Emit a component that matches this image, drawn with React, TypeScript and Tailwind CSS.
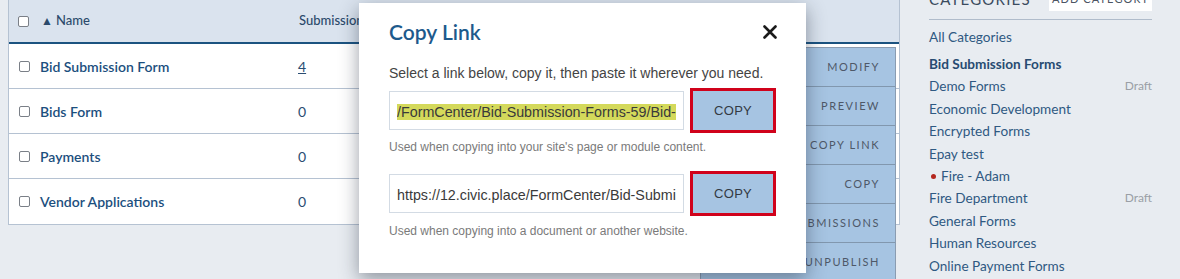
const FORMS = [
  { name: 'Bid Submission Form', count: '4', link: true },
  { name: 'Bids Form', count: '0', link: false },
  { name: 'Payments', count: '0', link: false },
  { name: 'Vendor Applications', count: '0', link: false },
];

const ACTIONS = ['MODIFY', 'PREVIEW', 'COPY LINK', 'COPY', 'SUBMISSIONS', 'UNPUBLISH'];

const CATEGORIES = [
  { name: 'Demo Forms', draft: true },
  { name: 'Economic Development' },
  { name: 'Encrypted Forms' },
  { name: 'Epay test' },
  { name: 'Fire - Adam', dot: true },
  { name: 'Fire Department', draft: true },
  { name: 'General Forms' },
  { name: 'Human Resources' },
  { name: 'Online Payment Forms' },
];

const muli = "font-['Lato','Noto_Sans',sans-serif]";
const arial = "font-['Liberation_Sans',Arial,sans-serif]";

function Checkbox() {
  return <span className="block h-[11px] w-[11px] shrink-0 rounded-[2px] border border-[#7a7f87] bg-white" />;
}

function CopyRow({ text, selected }: { text: string; selected?: boolean }) {
  return (
    <div className="flex items-center gap-[6px]">
      <div className="flex h-[39px] w-[299px] items-center overflow-hidden whitespace-nowrap border border-[#d3dbe4] bg-white pl-[7px] pr-[7px]">
        <div className="w-full overflow-hidden">
          <span
            className={`${arial} text-[14.3px] leading-[20px] text-[#3a3a3a] ${selected ? 'bg-[#d4d95b]' : ''}`}
          >
            {text}
          </span>
        </div>
      </div>
      <button
        type="button"
        className={`flex h-[45px] w-[87px] items-center justify-center border-[3px] border-[#d0021b] bg-[#a6c4e2] ${arial} text-[13px] tracking-[0.02em] text-[#333a44]`}
      >
        COPY
      </button>
    </div>
  );
}

export default function App() {
  return (
    <div className={`relative flex h-[279px] w-[1180px] items-start overflow-hidden bg-[#e8ecf1] ${muli}`}>
      {/* forms table */}
      <div className="ml-[8px] w-[892px] border-l border-r border-b border-[#b5c2d2] bg-white">
        <div className="flex h-[44px] items-center border-b-2 border-[#1b5380] bg-[#dae3ee] pl-[9px] text-[13px] text-[#2b4a6b]">
          <Checkbox />
          <span className="ml-[12px] w-[258px] font-medium">
            <span className="mr-[3px] text-[12px]">▲</span>Name
          </span>
          <span className="font-medium">Submissions</span>
        </div>
        {FORMS.map((f) => (
          <div key={f.name} className="flex h-[45px] items-center border-b border-[#b5c2d2] pl-[10px] last:border-b-0">
            <Checkbox />
            <span className="ml-[10px] w-[258px] text-[14px] font-semibold text-[#1c4f7e]">{f.name}</span>
            <span className={`text-[14px] text-[#2a4d73] ${f.link ? 'underline' : ''}`}>{f.count}</span>
          </div>
        ))}
      </div>

      {/* categories sidebar */}
      <div className="ml-[29px] -mt-[13px] w-[223px]">
        <div className="flex h-[24px] items-center justify-between">
          <span className="text-[15px] tracking-[0.08em] text-[#3a4b5e]">CATEGORIES</span>
          <span className="flex h-[24px] w-[103px] items-center justify-center bg-white text-[11px] tracking-[0.1em] text-[#4b5463]">
            ADD CATEGORY
          </span>
        </div>
        <div className="mt-[8px] border-b border-[#b0bccb]" />
        <div className="mt-[6px] text-[13.6px] leading-[22.4px] text-[#2f5982]">
          <div>All Categories</div>
          <div className="mt-[4.6px] font-bold text-[#274b71]">Bid Submission Forms</div>
          {CATEGORIES.map((c) => (
            <div key={c.name} className="flex items-center justify-between">
              <span className="flex items-center">
                {c.dot ? <span className="ml-[2px] mr-[5px] h-[5px] w-[5px] rounded-full bg-[#b4281f]" /> : null}
                {c.name}
              </span>
              {c.draft ? <span className="text-[12px] text-[#9a9fa6]">Draft</span> : null}
            </div>
          ))}
        </div>
      </div>

      {/* actions dropdown */}
      <div className="absolute left-[700px] top-[47px] w-[196px] border border-[#8a9cb1] bg-[#a6c4e2]">
        {ACTIONS.map((a) => (
          <div
            key={a}
            className="flex h-[39px] items-center justify-end border-b border-[#8197ae] pr-[15px] text-[11px] tracking-[0.14em] text-[#4e5868]"
          >
            {a}
          </div>
        ))}
      </div>

      {/* copy link modal */}
      <div className="absolute left-[359px] top-[3px] h-[270px] w-[447px] bg-white px-[30px] pt-[15px] shadow-[0_6px_18px_rgba(30,40,55,0.45)]">
        <div className="flex h-[28px] items-center justify-between">
          <h2 className="text-[21px] font-semibold text-[#1d5a8c]">Copy Link</h2>
          <svg width="14" height="14" viewBox="0 0 14 14" className="mr-[-1px]">
            <path d="M1.5 1.5 L12.5 12.5 M12.5 1.5 L1.5 12.5" stroke="#1a1a1a" strokeWidth="2.6" strokeLinecap="round" />
          </svg>
        </div>
        <p className={`mt-[17px] ${arial} text-[14px] leading-[20px] text-[#444]`}>
          Select a link below, copy it, then paste it wherever you need.
        </p>
        <div className="mt-[5px]">
          <CopyRow text="/FormCenter/Bid-Submission-Forms-59/Bid-Submission-Form-36" selected />
        </div>
        <p className={`mt-[5px] ${arial} text-[12px] leading-[18px] text-[#7a7a7a]`}>
          Used when copying into your site's page or module content.
        </p>
        <div className="mt-[15px]">
          <CopyRow text="https://12.civic.place/FormCenter/Bid-Submission-Forms-59/Bid-Submission-Form-36" />
        </div>
        <p className={`mt-[6px] ${arial} text-[12px] leading-[18px] text-[#7a7a7a]`}>
          Used when copying into a document or another website.
        </p>
      </div>
    </div>
  );
}
